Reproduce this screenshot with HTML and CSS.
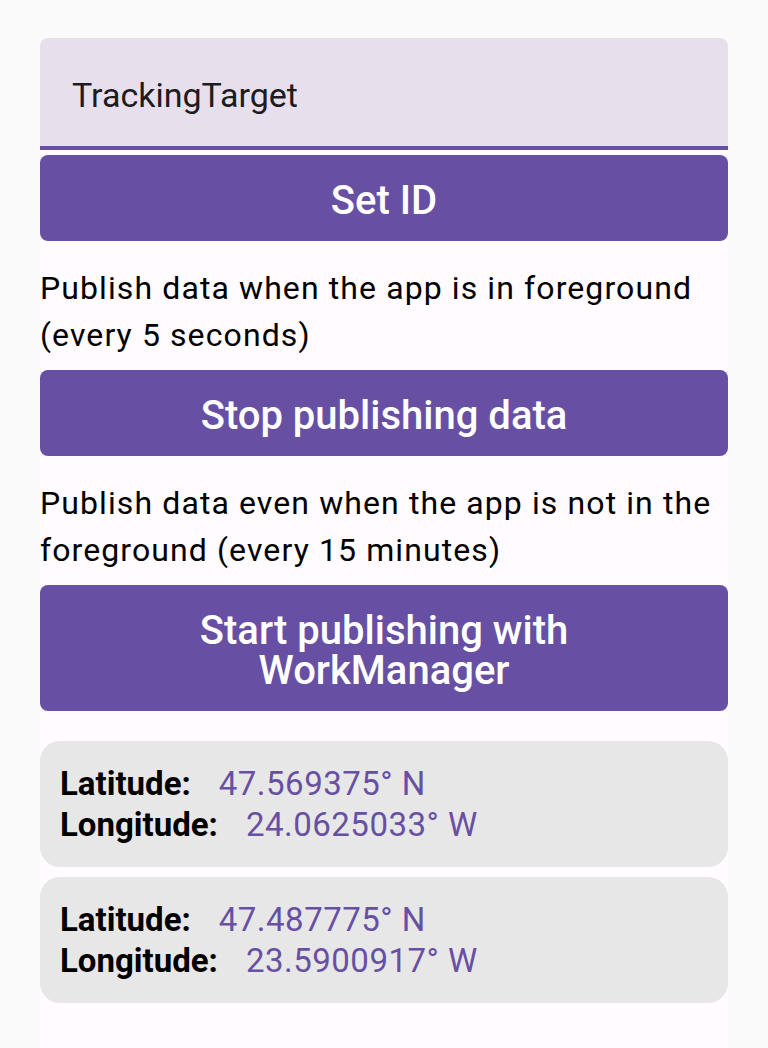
FILE: index.html
```html
<!DOCTYPE html>
<html lang="en">
<head>
<meta charset="utf-8">
<title>Tracking</title>
<link rel="stylesheet" href="styles.css">
</head>
<body>
<main class="screen">
  <div class="field"><span class="field-text">TrackingTarget</span></div>
  <button class="btn">Set ID</button>
  <p class="note">Publish data when the app is in foreground (every 5 seconds)</p>
  <button class="btn">Stop publishing data</button>
  <p class="note">Publish data even when the app is not in the foreground (every 15 minutes)</p>
  <button class="btn">Start publishing with<br>WorkManager</button>
  <div class="cards">
    <div class="card">
      <div class="row"><span class="label">Latitude:</span><span class="value">47.569375° N</span></div>
      <div class="row"><span class="label">Longitude:</span><span class="value">24.0625033° W</span></div>
    </div>
    <div class="card">
      <div class="row"><span class="label">Latitude:</span><span class="value">47.487775° N</span></div>
      <div class="row"><span class="label">Longitude:</span><span class="value">23.5900917° W</span></div>
    </div>
  </div>
</main>
</body>
</html>
```
FILE: styles.css
```css
html, body {
  margin: 0;
  padding: 0;
}
body {
  background: #fafafa;
  font-family: Roboto, "Liberation Sans", sans-serif;
}
.screen {
  margin: 38px 0 0 40px;
  width: 688px;
  min-height: 1010px;
  background: #fffbfe;
  display: flex;
  flex-direction: column;
}
.field {
  box-sizing: border-box;
  height: 112px;
  background: #e7e0ec;
  border-radius: 8px 8px 0 0;
  border-bottom: 4px solid #6750a4;
  padding: 5px 32px 0;
  display: flex;
  align-items: center;
  font-size: 34px;
  color: #1c1b1f;
  margin-bottom: 5px;
}
.btn {
  display: block;
  width: 100%;
  border: 0;
  background: #6750a4;
  color: #ffffff;
  border-radius: 8px;
  font-family: Roboto, "Liberation Sans", sans-serif;
  font-weight: 500;
  font-size: 40px;
  line-height: 40px;
  padding: 26px 24px 20px;
  text-align: center;
}
.note {
  margin: 24px 0 11px;
  font-size: 32px;
  line-height: 47px;
  letter-spacing: 1.1px;
  color: #000;
}
.cards {
  margin-top: 30px;
  display: flex;
  flex-direction: column;
  gap: 10px;
}
.card {
  background: #e7e7e7;
  border-radius: 20px;
  padding: 22px 20px;
  font-size: 33px;
  line-height: 41px;
}
.row {
  display: flex;
}
.label {
  font-weight: 700;
  color: #000;
}
.value {
  margin-left: 28px;
  letter-spacing: 0.5px;
  color: #6750a4;
}
```
